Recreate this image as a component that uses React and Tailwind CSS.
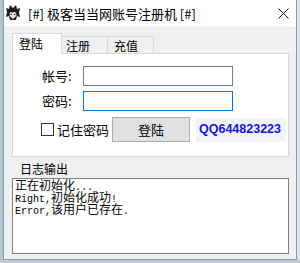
const ui = { fontFamily: '"Noto Sans CJK SC", "Noto Sans", sans-serif' };
const mono = { fontFamily: '"Liberation Mono", "Noto Sans CJK SC", monospace' };

const AppIcon = () => (
  <svg width="16" height="16" viewBox="0 0 16 16">
    <path d="M2 7 L1 3 L4 4 L5 0 L8 3 L11 0 L12 4 L15 3 L14 8 L15 12 L12 11 L11 15 L5 15 L4 11 L1 12 Z" fill="#1c1c24" />
    <path d="M5 7 L11 7 L11.5 11 L8 14 L4.5 11 Z" fill="#f2dccb" />
    <path d="M5 6 L7 8 L9 6 L11 8 L11 6 L8 4 Z" fill="#1c1c24" />
    <rect x="5.5" y="9" width="1.5" height="1" fill="#333" />
    <rect x="9" y="9" width="1.5" height="1" fill="#333" />
  </svg>
);

const Log = ({ children }) => <div className="h-[12px] leading-[12px] whitespace-nowrap">{children}</div>;
const L = ({ children }) => <span className="text-[10px]">{children}</span>;

export default function App() {
  return (
    <div className="w-[300px] h-[263px] overflow-hidden bg-[#cfd6df] flex flex-col" style={ui}>
      <div className="flex h-[260px]">
        <div className="w-[3px] bg-[#b9c3cf]" />
        <div className="w-[294px] h-[260px] bg-[#f0f0f0] border-x border-b border-[#7f9db9] flex flex-col">
          <div className="h-[26px] bg-white flex items-center shrink-0">
            <div className="ml-[1px]">
              <AppIcon />
            </div>
            <span className="ml-[7px] text-[13px] leading-none text-black">[#] 极客当当网账号注册机 [#]</span>
            <svg className="ml-auto mr-[7px]" width="11" height="11" viewBox="0 0 11 11">
              <path d="M0.5 0.5 L10.5 10.5 M10.5 0.5 L0.5 10.5" stroke="#111" strokeWidth="1" />
            </svg>
          </div>

          <div className="pl-[8px] pt-[7px] flex flex-col">
            <div className="flex items-end h-[21px] relative z-10 text-[12px] text-black">
              <div className="w-[50px] h-[21px] bg-white border-x border-t border-[#d9d9d9] pl-[6px] flex items-center">
                登陆
              </div>
              <div className="w-[46px] h-[17px] mb-[1px] bg-[#f0f0f0] border-r border-t border-[#d9d9d9] pl-[4px] pt-[2px] flex items-center">
                注册
              </div>
              <div className="w-[46px] h-[17px] mb-[1px] bg-[#f0f0f0] border-r border-t border-[#d9d9d9] pl-[6px] pt-[2px] flex items-center">
                充值
              </div>
            </div>

            <div className="-mt-[1px] w-[277px] h-[104px] bg-white border border-[#d9d9d9] flex flex-col text-[13px] text-black">
              <div className="mt-[12px] h-[20px] flex items-center pl-[29px]">
                <span className="w-[41px]">帐号:</span>
                <div className="w-[150px] h-[20px] border border-[#7a7a7a] bg-white" />
              </div>
              <div className="mt-[5px] h-[20px] flex items-center pl-[29px]">
                <span className="w-[41px]">密码:</span>
                <div className="w-[150px] h-[20px] border border-[#0078d7] bg-white" />
              </div>
              <div className="mt-[6px] h-[25px] flex items-center pl-[28px]">
                <div className="w-[71px] flex items-center">
                  <div className="w-[13px] h-[13px] border border-[#333] bg-white shrink-0" />
                  <span className="ml-[3px] whitespace-nowrap">记住密码</span>
                </div>
                <div className="w-[78px] h-[25px] bg-[#e1e1e1] border border-[#adadad] flex items-center justify-center">
                  登陆
                </div>
                <div
                  className="ml-[6px] w-[90px] h-[24px] bg-[#f2f3f7] flex items-center pl-[3px] text-[12.5px] font-bold text-[#1515d6]"
                  style={{ fontFamily: '"Liberation Sans", Arial, sans-serif' }}
                >
                  QQ644823223
                </div>
              </div>
            </div>

            <div className="h-[21px] flex items-center pl-[8px] pt-[3px] text-[12px] text-black relative">
              <span className="bg-[#f0f0f0] pr-[2px] relative z-10">日志输出</span>
            </div>

            <div className="w-[277px] h-[76px] bg-white border border-[#828282] pl-[2px] pt-[2px] text-[12px] text-black" style={mono}>
              <Log>
                正在初始化<L>...</L>
              </Log>
              <Log>
                <L>Right,</L>初始化成功<L>!</L>
              </Log>
              <Log>
                <L>Error,</L>该用户已存在<L>.</L>
              </Log>
            </div>
          </div>
        </div>
        <div className="w-[3px] bg-[#dfe4ea]" />
      </div>
      <div className="flex-1 bg-[#c3cad3]" />
    </div>
  );
}
